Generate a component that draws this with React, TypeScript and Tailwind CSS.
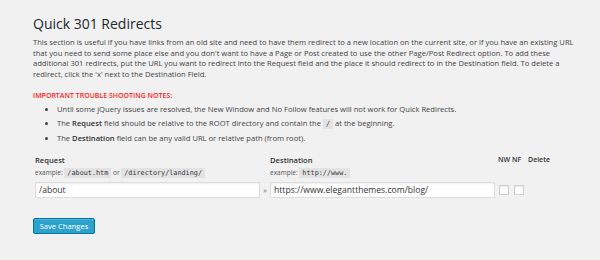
import React from 'react';

const Code = ({ children }: { children: React.ReactNode }) => (
  <code className="bg-[#e3e3e3] px-[3px] py-[1px] text-[#333] font-['DejaVu_Sans_Mono',monospace] text-[6.8px]">
    {children}
  </code>
);

export default function App() {
  return (
    <div className="w-[600px] h-[260px] bg-[#f1f1f1] font-['Open_Sans',sans-serif] text-[#444] overflow-hidden">
      <div className="pl-[33px] pr-[25px] pt-[14px]">
        <h2 className="text-[14px] leading-[20px] text-[#23282d]">Quick 301 Redirects</h2>
        <p className="mt-[3px] text-[7.6px] leading-[10.6px] whitespace-nowrap">
          This section is useful if you have links from an old site and need to have them redirect to a new location on the current site, or if you have an existing URL
          <br />
          that you need to send some place else and you don't want to have a Page or Post created to use the other Page/Post Redirect option. To add these
          <br />
          additional 301 redirects, put the URL you want to redirect into the Request field and the place it should redirect to in the Destination field. To delete a
          <br />
          redirect, click the 'x' next to the Destination Field.
        </p>
        <p className="mt-[11px] text-[7px] leading-[12px] font-semibold text-[#ff1a1a]">IMPORTANT TROUBLE SHOOTING NOTES:</p>
        <ul className="ml-[24px] list-disc text-[7.6px] leading-[14px] text-[#444]">
          <li>Until some jQuery issues are resolved, the New Window and No Follow features will not work for Quick Redirects.</li>
          <li>
            The <b className="font-semibold text-[#333]">Request</b> field should be relative to the ROOT directory and contain the <Code>/</Code> at the beginning.
          </li>
          <li>
            The <b className="font-semibold text-[#333]">Destination</b> field can be any valid URL or relative path (from root).
          </li>
        </ul>

        <div className="mt-[9px] ml-[2px] grid grid-cols-[225px_10px_225px_15px_15px_40px] items-center text-[#333]">
          <div className="text-[7.6px] font-semibold leading-[12px]">Request</div>
          <div />
          <div className="text-[7.6px] font-semibold leading-[12px]">Destination</div>
          <div className="text-[7px] font-semibold leading-[12px] pl-[3px]">NW</div>
          <div className="text-[7px] font-semibold leading-[12px] pl-[2px]">NF</div>
          <div className="text-[7px] font-semibold leading-[12px] pl-[3px]">Delete</div>

          <div className="text-[6.5px] leading-[14px] text-[#555]">
            example: <Code>/about.htm</Code> or <Code>/directory/landing/</Code>
          </div>
          <div />
          <div className="text-[6.5px] leading-[14px] text-[#555] col-span-4">
            example: <Code>http://www.</Code>
          </div>

          <input
            readOnly
            value="/about"
            className="mt-[2px] h-[16px] bg-white border border-[#dddddd] shadow-[inset_0_1px_2px_rgba(0,0,0,0.07)] px-[3px] text-[8.6px] text-[#333] outline-none"
          />
          <div className="text-[7px] text-[#666] text-center leading-none pt-[3px]">»</div>
          <input
            readOnly
            value="https://www.elegantthemes.com/blog/"
            className="mt-[2px] h-[16px] bg-white border border-[#dddddd] shadow-[inset_0_1px_2px_rgba(0,0,0,0.07)] px-[3px] text-[8.6px] text-[#333] outline-none"
          />
          <div className="pl-[4px] pt-[2px]">
            <div className="w-[10px] h-[10px] bg-white border border-[#cfcfcf] shadow-[inset_0_1px_2px_rgba(0,0,0,0.1)]" />
          </div>
          <div className="pl-[4px] pt-[2px]">
            <div className="w-[10px] h-[10px] bg-white border border-[#cfcfcf] shadow-[inset_0_1px_2px_rgba(0,0,0,0.1)]" />
          </div>
          <div />
        </div>

        <button className="mt-[20px] h-[16px] w-[62px] rounded-[2px] bg-[#2ea2cc] border border-[#0074a2] shadow-[inset_0_1px_0_rgba(120,200,230,0.5)] text-white text-[7.6px] leading-none">
          Save Changes
        </button>
      </div>
    </div>
  );
}
